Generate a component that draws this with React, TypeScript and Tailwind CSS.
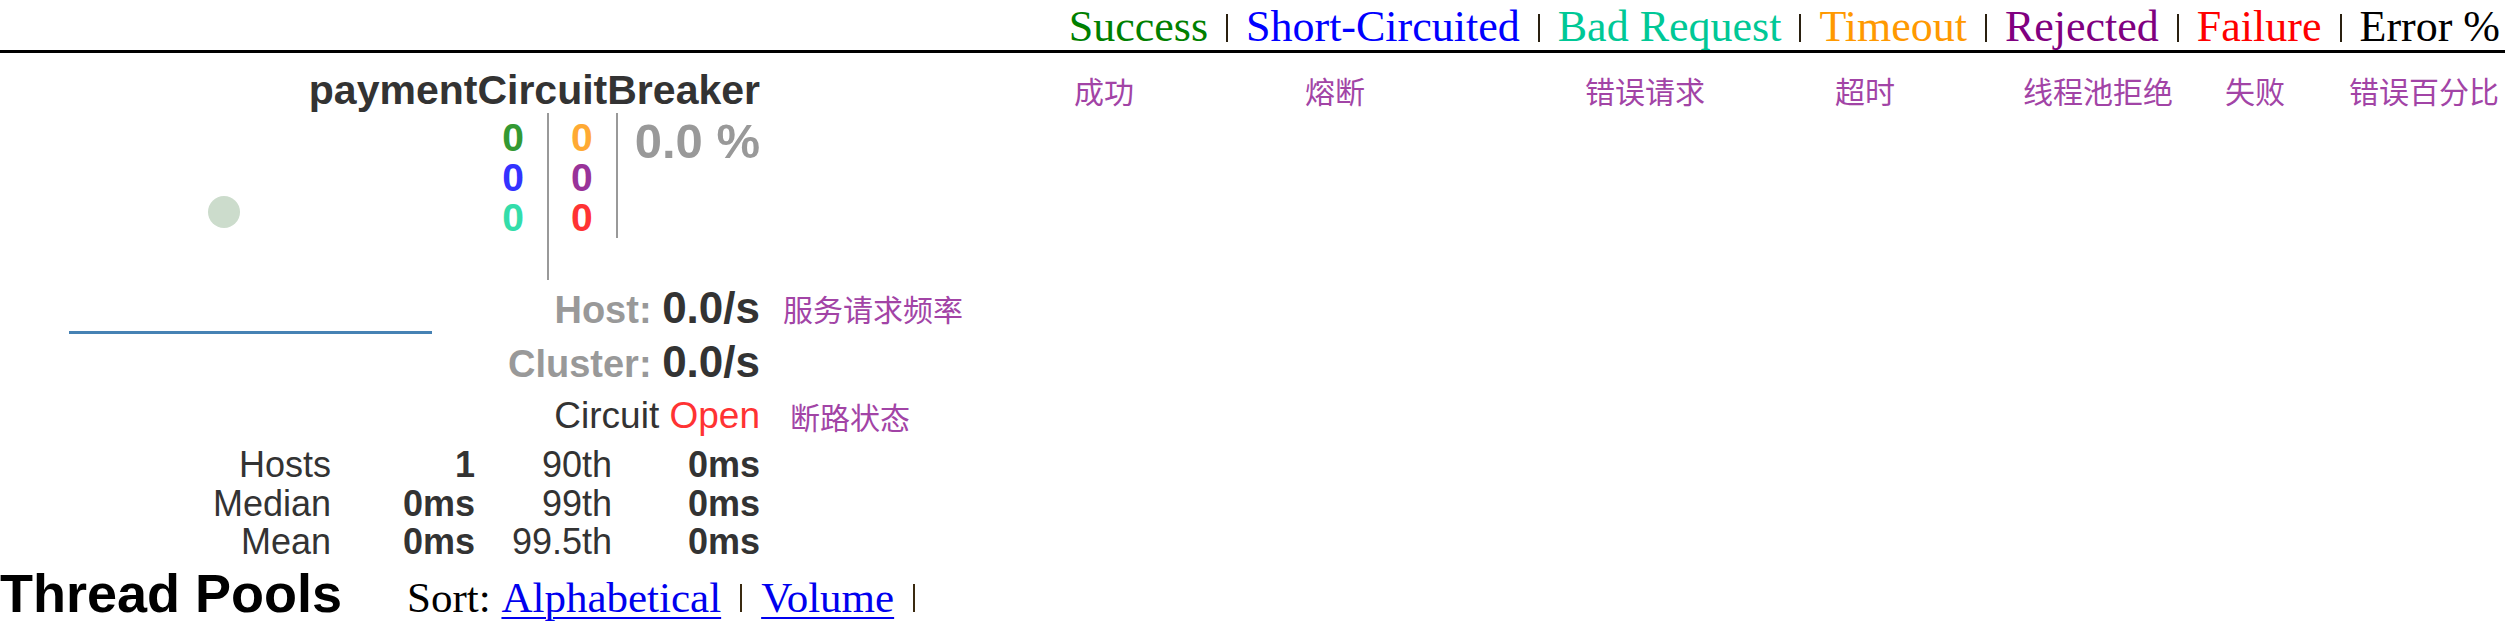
const legend = [
  { label: "Success", color: "text-[#008000]" },
  { label: "Short-Circuited", color: "text-[#0000ff]" },
  { label: "Bad Request", color: "text-[#00c896]" },
  { label: "Timeout", color: "text-[#ff9900]" },
  { label: "Rejected", color: "text-[#800080]" },
  { label: "Failure", color: "text-[#ff0000]" },
  { label: "Error %", color: "text-black" },
];

// notes under the legend, each box wide enough to reach the next label
const legendNotes = [
  { text: "成功", width: "w-[231px]" },
  { text: "熔断", width: "w-[280px]" },
  { text: "错误请求", width: "w-[250px]" },
  { text: "超时", width: "w-[188px]" },
  { text: "线程池拒绝", width: "w-[202px]" },
  { text: "失败", width: "w-[124px]" },
  { text: "错误百分比", width: "" },
];

const latency = [
  ["Hosts", "1", "90th", "0ms"],
  ["Median", "0ms", "99th", "0ms"],
  ["Mean", "0ms", "99.5th", "0ms"],
];

function Bar() {
  return <span className="mx-[18px] mt-[3px] inline-block h-[28px] w-[2px] bg-[#2a2010]" />;
}

function Note({ children, className = "" }: { children: React.ReactNode; className?: string }) {
  return (
    <span className={`font-['Noto_Sans_CJK_SC',sans-serif] text-[30px] leading-none whitespace-nowrap text-[#a244a6] ${className}`}>
      {children}
    </span>
  );
}

export default function App() {
  return (
    <div className="h-[632px] w-[2505px] overflow-hidden bg-white font-['Liberation_Sans',Arial,sans-serif] text-[#333]">
      {/* Legend bar */}
      <header className="flex h-[53px] items-center justify-end border-b-[3px] border-black pt-[3px] pr-[5px] font-['Liberation_Serif',serif] text-[44px] leading-none whitespace-nowrap">
        {legend.map((item, i) => (
          <div key={item.label} className="flex items-center">
            {i > 0 && <Bar />}
            <span className={item.color}>{item.label}</span>
          </div>
        ))}
      </header>

      {/* Name row + legend notes */}
      <div className="flex h-[60px] items-start">
        <div className="w-[760px] shrink-0 pt-[14px] text-right text-[41px] leading-[46px] font-bold text-[#333]">
          paymentCircuitBreaker
        </div>
        <div className="ml-[314px] flex pt-[22px]">
          {legendNotes.map((n) => (
            <div key={n.text} className={`${n.width} flex h-[30px] items-center`}>
              <Note>{n.text}</Note>
            </div>
          ))}
        </div>
      </div>

      {/* Chart + counters */}
      <div className="flex">
        <svg width="500" height="333" className="shrink-0">
          <circle cx="224" cy="99" r="16" fill="#ccdccc" />
          <line x1="69" y1="219.5" x2="432" y2="219.5" stroke="#4682b4" strokeWidth="3" />
        </svg>
        <div className="flex flex-col">
          <div className="flex h-[167px] w-[260px] items-start justify-end font-bold">
            <div className="flex h-[167px] flex-col border-r-2 border-[#999] pt-[5px] pr-[23px] text-right text-[39px] leading-[40px]">
              <span className="text-[#339933]">0</span>
              <span className="text-[#3333ff]">0</span>
              <span className="text-[#33ddaa]">0</span>
            </div>
            <div className="flex h-[125px] flex-col border-r-2 border-[#999] pt-[5px] pl-[22px] pr-[23px] text-right text-[39px] leading-[40px]">
              <span className="text-[#ffaa33]">0</span>
              <span className="text-[#993399]">0</span>
              <span className="text-[#ff3333]">0</span>
            </div>
            <div className="pt-[2px] pl-[17px] text-[49px] leading-[52px] whitespace-nowrap text-[#999]">0.0 %</div>
          </div>

          <div className="mt-[1px] flex h-[54px] items-center">
            <div className="flex w-[260px] items-baseline justify-end leading-none font-bold whitespace-nowrap">
              <span className="text-[38px] text-[#999]">Host:&nbsp;</span>
              <span className="text-[44px] text-[#333]">0.0/s</span>
            </div>
            <Note className="ml-[23px]">服务请求频率</Note>
          </div>

          <div className="flex h-[54px] items-center">
            <div className="flex w-[260px] items-baseline justify-end leading-none font-bold whitespace-nowrap">
              <span className="text-[38px] text-[#999]">Cluster:&nbsp;</span>
              <span className="text-[44px] text-[#333]">0.0/s</span>
            </div>
          </div>

          <div className="flex h-[53px] items-center">
            <div className="w-[260px] text-right text-[37px] leading-none whitespace-nowrap">
              <span className="text-[#333]">Circuit </span>
              <span className="text-[#ff3333]">Open</span>
            </div>
            <Note className="ml-[30px]">断路状态</Note>
          </div>
        </div>
      </div>

      {/* Latency table */}
      <div className="grid w-[760px] grid-cols-[331px_144px_137px_148px] text-right text-[36px] leading-[38.5px] text-[#333]">
        {latency.map((row) =>
          row.map((cell, j) => (
            <div key={row[0] + j} className={j % 2 === 1 ? "font-bold" : ""}>
              {cell}
            </div>
          ))
        )}
      </div>

      {/* Thread pools header */}
      <div className="flex items-baseline whitespace-nowrap">
        <h3 className="text-[54px] leading-[62px] font-bold text-black">Thread Pools</h3>
        <div className="ml-[65px] flex items-baseline font-['Liberation_Serif',serif] text-[43px] text-black">
          <span>Sort:&nbsp;</span>
          <a className="text-[#0000ee] underline decoration-2 underline-offset-[5px]">Alphabetical</a>
          <span className="mx-[19px] inline-block h-[28px] w-[2px] bg-[#3a2a10]" />
          <a className="text-[#0000ee] underline decoration-2 underline-offset-[5px]">Volume</a>
          <span className="mx-[19px] inline-block h-[28px] w-[2px] bg-[#3a2a10]" />
        </div>
      </div>
    </div>
  );
}
